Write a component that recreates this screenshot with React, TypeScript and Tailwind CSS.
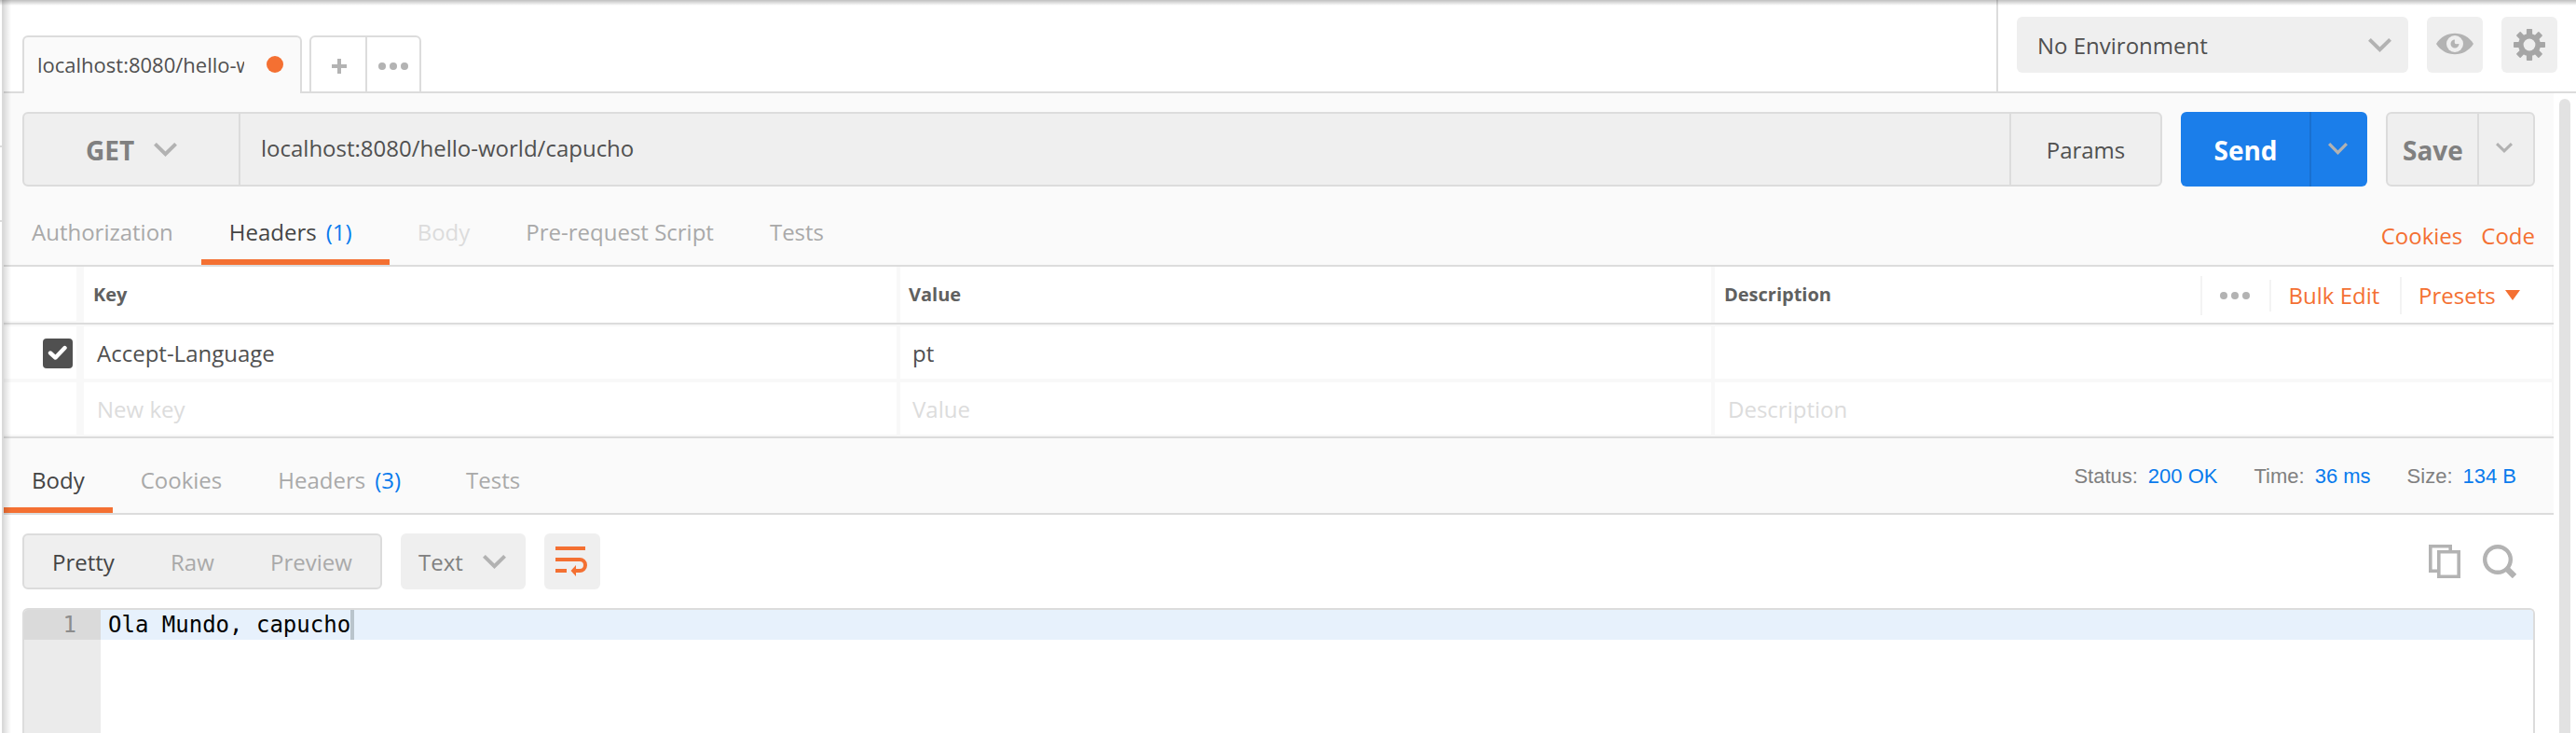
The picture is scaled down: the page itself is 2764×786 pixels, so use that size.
import type { ReactNode } from 'react';

function Chevron({ w, h, stroke }: { w: number; h: number; stroke: number }) {
  const e = stroke * 0.354;
  return (
    <svg width={w} height={h} viewBox={`0 0 ${w} ${h}`} className="shrink-0" fill="none" stroke="#b2b2b2" strokeWidth={stroke}>
      <path d={`M${e} ${e} L${w / 2} ${h - stroke * 0.71} L${w - e} ${e}`} />
    </svg>
  );
}

function Dots() {
  return (
    <svg width="32" height="8" viewBox="0 0 32 8" className="shrink-0" fill="#b3b3b3">
      <circle cx="4" cy="4" r="4" />
      <circle cx="16" cy="4" r="4" />
      <circle cx="28" cy="4" r="4" />
    </svg>
  );
}

function Eye() {
  return (
    <svg width="40" height="24" viewBox="0 0 40 24" className="mb-0.5 shrink-0">
      <path d="M0 12 C5 4.500 12 .8 20 .8 S35 4.500 40 12 C35 19.500 28 23.200 20 23.200 S5 19.500 0 12Z" fill="#b3b3b3" />
      <circle cx="20" cy="12" r="9" fill="#efefef" />
      <path d="M20 7.500 A4.500 4.500 0 1 0 24.500 12 L21.500 12.300 A2 2 0 0 1 19.700 10.300 Z" fill="#b3b3b3" />
    </svg>
  );
}

function Gear() {
  const angles = [0, 45, 90, 135, 180, 225, 270, 315];
  return (
    <svg width="36" height="36" viewBox="-18 -18 36 36" className="shrink-0">
      <g fill="#a6a6a6">
        {angles.map((a) => (
          <rect key={a} x="-3.100" y="-17" width="6.200" height="8" rx=".8" transform={`rotate(${a})`} />
        ))}
        <circle r="12" />
      </g>
      <circle r="6.400" fill="#efefef" />
    </svg>
  );
}

function Tab({ label, count, state = 'idle' }: { label: string; count?: number; state?: 'idle' | 'active' | 'disabled' }) {
  const color = state === 'active' ? 'text-[#444444]' : state === 'disabled' ? 'text-[#dcdcdc]' : 'text-[#a9a9a9]';
  const line = state === 'active' ? 'border-[#f47032]' : 'border-transparent';
  return (
    <div className={`flex h-full items-center border-b-6 px-[30px] ${color} ${line}`}>
      <span>{label}</span>
      {count !== undefined && <span className="mx-2.5 text-[#097bed]">({count})</span>}
    </div>
  );
}

function Cell({ children, className = '' }: { children?: ReactNode; className?: string }) {
  return <div className={`flex items-center bg-white pt-px ${className}`}>{children}</div>;
}

function TopBar() {
  return (
    <div className="flex h-[100px] shrink-0">
      <div className="flex w-[2138px] items-end">
        <div className="h-full w-5 border-b-2 border-[#dcdcdc]" />
        <div className="flex h-[62px] w-[300px] items-center justify-between rounded-t-md border-2 border-b-0 border-[#dcdcdc] bg-[#fafafa] pr-[18px] pl-3.5">
          <span className="w-[222px] overflow-hidden text-[22px] whitespace-nowrap text-[#505050]">localhost:8080/hello-world/capucho</span>
          <span className="mb-0.5 size-[18px] rounded-full bg-[#f47032]" />
        </div>
        <div className="h-full w-2 border-b-2 border-[#dcdcdc]" />
        <div className="flex h-[62px] w-[120px] rounded-t-md border-2 border-[#dcdcdc]">
          <div className="flex w-[60px] items-center justify-center border-r-2 border-[#dcdcdc] pt-1 pl-0.5">
            <svg width="16" height="16" viewBox="0 0 16 16" fill="#b3b3b3">
              <path d="M6 0h4v6h6v4h-6v6H6v-6H0V6h6z" />
            </svg>
          </div>
          <div className="flex flex-1 items-center justify-center pt-1">
            <Dots />
          </div>
        </div>
        <div className="h-full flex-1 border-b-2 border-[#dcdcdc]" />
      </div>
      <div className="flex flex-1 items-start gap-5 border-b-2 border-l-2 border-[#dcdcdc] pt-[18px] pl-5">
        <div className="flex h-[60px] w-[420px] items-center justify-between rounded-md bg-[#efefef] pt-px pr-[18.500px] pl-[22px] text-[#505050]">
          <span>No Environment</span>
          <Chevron w={25} h={15} stroke={4} />
        </div>
        <div className="flex size-[60px] items-center justify-center rounded-md bg-[#efefef]">
          <Eye />
        </div>
        <div className="flex size-[60px] items-center justify-center rounded-md bg-[#efefef]">
          <Gear />
        </div>
      </div>
    </div>
  );
}

function RequestLine() {
  return (
    <div className="flex h-20 gap-5 pl-5">
      <div className="flex w-[2296px] rounded-md border-2 border-[#dcdcdc] bg-[#efefef]">
        <div className="flex w-[232px] items-center border-r-2 border-[#dcdcdc] pl-[66px]">
          <span className="w-[72.500px] pt-[3px] text-[28px] font-bold text-[#808080]">GET</span>
          <Chevron w={25} h={15} stroke={4} />
        </div>
        <div className="flex flex-1 items-center pb-0.5 pl-[22px] text-[#505050]">localhost:8080/hello-world/capucho</div>
        <div className="flex w-[162px] items-center justify-center border-l-2 border-[#dcdcdc] pt-px text-[#505050]">Params</div>
      </div>
      <div className="flex w-[200px] rounded-md bg-[#1b7eea] text-white">
        <div className="flex w-[140px] items-center border-r-2 border-[#1970d0] pt-[3px] pl-[35.500px] text-[28px] font-bold">Send</div>
        <div className="flex flex-1 items-start justify-center pt-[33px] pr-[3px]">
          <Chevron w={21} h={13} stroke={3.2} />
        </div>
      </div>
      <div className="flex w-[160px] rounded-md border-2 border-[#dcdcdc] bg-[#efefef]">
        <div className="flex w-[98px] items-center border-r-2 border-[#dcdcdc] pt-[3px] pl-4 text-[28px] font-bold text-[#808080]">Save</div>
        <div className="flex flex-1 items-start justify-center pt-[31px] pr-1">
          <Chevron w={18} h={11} stroke={3} />
        </div>
      </div>
    </div>
  );
}

function HeadersTable() {
  return (
    <div className="flex flex-col bg-[#f8f8f8] pr-0.5">
      <div className="flex h-[60px] gap-1 text-[20px] font-bold text-[#606060]">
        <Cell className="mr-1 mb-0.5 w-[78px]" />
        <Cell className="w-[872px] pl-2.5">Key</Cell>
        <Cell className="w-[870px] pl-[9px]">Value</Cell>
        <Cell className="flex-1 pl-2.5">
          <span>Description</span>
          <div className="ml-auto flex items-center text-2xl font-normal text-[#f47032]">
            <span className="flex h-[42px] w-[74px] items-center justify-center border-l-2 border-[#f3f3f3] pr-0.5">
              <Dots />
            </span>
            <span className="flex h-[34px] w-[140px] items-center border-l-2 border-[#f3f3f3] pl-[18.500px]">Bulk Edit</span>
            <span className="flex h-10 w-[163px] items-center gap-2.5 border-l-2 border-[#f3f3f3] pl-[18px]">
              Presets
              <svg width="16" height="11" viewBox="0 0 16 11" fill="#f47032">
                <path d="M0 0h16L8 11z" />
              </svg>
            </span>
          </div>
        </Cell>
      </div>
      <div className="-mr-0.5 h-0.5 bg-[#dcdcdc]" />
      <div className="mt-0.5 flex h-14 gap-1 text-[#505050]">
        <Cell className="mr-1 w-[78px] justify-end pt-[4px] pr-1">
          <span className="flex size-8 items-center justify-center rounded-[4px] bg-[#505050]">
            <svg width="22" height="18" viewBox="0 0 22 18" fill="none" stroke="#fff" strokeWidth="4.400" strokeLinecap="round" strokeLinejoin="round">
              <path d="M3 8.500 L8.500 13.500 L18.500 3" />
            </svg>
          </span>
        </Cell>
        <Cell className="w-[872px] pl-3.5">Accept-Language</Cell>
        <Cell className="w-[870px] pl-[13px]">pt</Cell>
        <Cell className="flex-1" />
      </div>
      <div className="mt-1 mb-0.5 flex h-14 gap-1 text-[#dcdcdc]">
        <Cell className="mr-1 w-[78px]" />
        <Cell className="w-[872px] pl-3.5">New key</Cell>
        <Cell className="w-[870px] pl-[13px]">Value</Cell>
        <Cell className="flex-1 pl-3.5">Description</Cell>
      </div>
      <div className="-mr-0.5 h-0.5 bg-[#dcdcdc]" />
    </div>
  );
}

function Stat({ label, value }: { label: string; value: string }) {
  return (
    <span className="flex gap-[11px]">
      <span className="text-[#808080]">{label}</span>
      <span className="text-[#097bed]">{value}</span>
    </span>
  );
}

function ResponseBody() {
  return (
    <div className="flex flex-1 flex-col bg-white pt-5 pr-5 pl-5">
      <div className="flex h-[60px] items-center">
        <div className="flex h-full w-[386px] items-center rounded-md border-2 border-[#dcdcdc] bg-[#efefef] pt-px pl-[30px] text-[#a9a9a9]">
          <span className="w-[127px] text-[#444444]">Pretty</span>
          <span className="w-[107px]">Raw</span>
          <span>Preview</span>
        </div>
        <div className="ml-5 flex h-full w-[134px] items-center justify-between rounded-md bg-[#efefef] pt-px pr-[21px] pl-[19px] text-[#808080]">
          Text
          <Chevron w={25} h={15} stroke={4} />
        </div>
        <div className="ml-5 flex size-[60px] items-center justify-center rounded-md bg-[#efefef]">
          <svg width="36" height="36" viewBox="0 0 36 36" fill="none" stroke="#f47032" strokeWidth="4">
            <path d="M0 4h32M0 16h26a6 6 0 0 1 0 12h-6M0 28h12" />
            <path d="M16.500 28l5.500-6v12z" fill="#f47032" stroke="none" />
          </svg>
        </div>
        <div className="ml-auto flex gap-6 pr-5">
          <svg width="34" height="36" viewBox="0 0 34 36" fill="#fff" stroke="#b3b3b3" strokeWidth="3.600">
            <path d="M1.800 1.800h21.400v26.400H1.800z" />
            <path d="M10.800 7.800h21.400v26.400H10.800z" />
          </svg>
          <svg width="36" height="36" viewBox="0 0 36 36" fill="none" stroke="#b3b3b3">
            <circle cx="16" cy="16" r="13.800" strokeWidth="4.400" />
            <path d="M25 25l9 9" strokeWidth="6.200" />
          </svg>
        </div>
      </div>
      <div className="mt-5 flex flex-1 overflow-hidden rounded-t-md border-2 border-b-0 border-[#dcdcdc] font-['DejaVu_Sans_Mono',monospace] leading-8">
        <div className="w-[82px] bg-[#ebebeb]">
          <div className="h-8 bg-[#dadada] pr-[26px] text-right text-[#8c8c8c]">1</div>
        </div>
        <div className="flex-1">
          <div className="flex h-8 bg-[#e7f1fc] pl-2 text-black">
            <span>Ola Mundo, capucho</span>
            <span className="w-1 bg-[#b9c4cc]" />
          </div>
        </div>
      </div>
    </div>
  );
}

export default function App() {
  return (
    <div className="relative flex h-[786px] w-[2764px] overflow-hidden bg-white font-['Open_Sans',sans-serif] text-2xl">
      <div className="flex w-1 shrink-0 flex-col border-r-2 border-[#dadada] pt-[156px]">
        <div className="h-0.5 bg-[#dcdcdc]" />
        <div className="mt-[78px] h-0.5 bg-[#dcdcdc]" />
      </div>
      <div className="flex flex-1 flex-col">
        <TopBar />
        <div className="flex flex-1">
          <div className="flex w-[2736px] flex-col">
            <div className="bg-[#fafafa] pt-5">
              <RequestLine />
              <div className="flex h-[86px] justify-between border-b-2 border-[#dcdcdc] pt-5">
                <div className="flex">
                  <Tab label="Authorization" />
                  <Tab label="Headers" count={1} state="active" />
                  <Tab label="Body" state="disabled" />
                  <Tab label="Pre-request Script" />
                  <Tab label="Tests" />
                </div>
                <div className="flex gap-5 pt-[17px] pr-5 text-[#f47032]">
                  <span>Cookies</span>
                  <span>Code</span>
                </div>
              </div>
            </div>
            <HeadersTable />
            <div className="flex h-[82px] justify-between border-b-2 border-[#dcdcdc] bg-[#fafafa] pt-4">
              <div className="flex">
                <Tab label="Body" state="active" />
                <Tab label="Cookies" />
                <Tab label="Headers" count={3} />
                <Tab label="Tests" />
              </div>
              <div className="flex gap-[39px] pt-2.5 pr-10 font-['Liberation_Sans',sans-serif] text-[22px]">
                <Stat label="Status:" value="200 OK" />
                <Stat label="Time:" value="36 ms" />
                <Stat label="Size:" value="134 B" />
              </div>
            </div>
            <ResponseBody />
          </div>
          <div className="flex-1 bg-white pt-1.5 pl-1.5">
            <div className="h-full w-3 rounded-t-full bg-[#e2e2e2]" />
          </div>
        </div>
      </div>
      <div className="pointer-events-none absolute inset-y-0 left-1 w-2 bg-linear-to-r from-black/13 to-transparent" />
      <div className="pointer-events-none absolute inset-x-0 top-0 h-1.5 bg-linear-to-b from-black/25 to-transparent" />
    </div>
  );
}
